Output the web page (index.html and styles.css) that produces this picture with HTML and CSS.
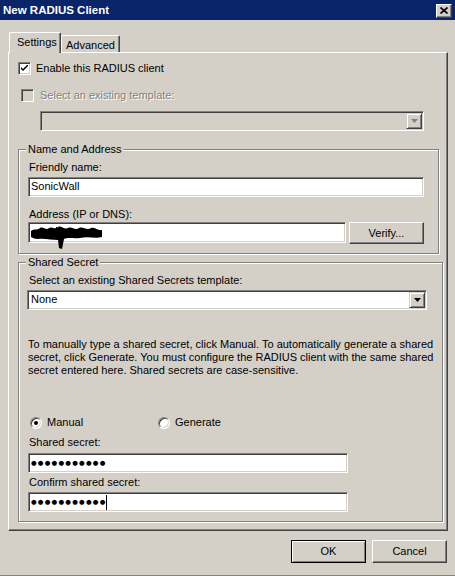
FILE: index.html
```html
<!DOCTYPE html>
<html>
  <head>
    <meta charset="utf-8">
    <title>New RADIUS Client</title>
    <link rel="stylesheet" href="styles.css">
  </head>
  <body>
    <div class="window">
      <div class="titlebar">
        <span class="title">New RADIUS Client</span>
        <button class="close" type="button">
          <svg width="8" height="7" viewBox="0 0 8 7"><path d="M0.5 0.5 L7.5 6.5 M7.5 0.5 L0.5 6.5" stroke="#000" stroke-width="1.6" fill="none"/></svg>
        </button>
      </div>

      <div class="tabs">
        <div class="tab tab-settings active">Settings</div>
        <div class="tab tab-advanced">Advanced</div>
      </div>

      <div class="panel">
        <label class="check-row">
          <span class="check"><svg width="7" height="7" viewBox="0 0 7 7"><path d="M0 2 L2 4 L7 -1 L7 1 L2 6 L0 4 Z" fill="#000"/></svg></span>
          Enable this RADIUS client
        </label>
        <label class="check-row disabled">
          <span class="check"></span>
          Select an existing template:
        </label>
        <div class="combo combo-template disabled">
          <span class="combo-value"></span>
          <span class="combo-btn"><svg width="7" height="4" viewBox="0 0 7 4"><path d="M0 0 H7 L3.5 4 Z" fill="#808080"/></svg></span>
        </div>

        <fieldset class="group group-name">
          <legend>Name and Address</legend>
          <div class="label">Friendly name:</div>
          <div class="field field-name">SonicWall</div>
          <div class="label label-address">Address (IP or DNS):</div>
          <div class="field-row">
            <div class="field field-address">
              <svg class="redact" width="80" height="28" viewBox="0 0 80 28"><path d="M1 6 C4 3 7 6 10 3 C13 1 16 6 19 3 C22 1 25 5 28 2 C31 0 34 5 38 3 C42 1 45 6 49 3 C53 1 57 6 61 3 C65 2 68 6 72 5 L72 12 C66 14 58 11 50 13 C44 14 38 12 34 14 L32 24 L29 23 L28 15 C22 15 14 13 8 14 C5 14 3 13 1 12 Z" fill="#000"/></svg>
            </div>
            <button class="btn btn-verify" type="button">Verify...</button>
          </div>
        </fieldset>

        <fieldset class="group group-secret">
          <legend>Shared Secret</legend>
          <div class="label">Select an existing Shared Secrets template:</div>
          <div class="combo combo-secret">
            <span class="combo-value">None</span>
            <span class="combo-btn"><svg width="7" height="4" viewBox="0 0 7 4"><path d="M0 0 H7 L3.5 4 Z" fill="#000"/></svg></span>
          </div>
          <p class="hint">To manually type a shared secret, click Manual. To automatically generate a shared<br>secret, click Generate. You must configure the RADIUS client with the same shared<br>secret entered here. Shared secrets are case-sensitive.</p>
          <div class="radio-row">
            <label class="radio-item radio-manual"><span class="radio checked"></span>Manual</label>
            <label class="radio-item"><span class="radio"></span>Generate</label>
          </div>
          <div class="label label-secret">Shared secret:</div>
          <div class="field field-secret"><span class="dots">●●●●●●●●●●●</span></div>
          <div class="label label-confirm">Confirm shared secret:</div>
          <div class="field field-secret"><span class="dots">●●●●●●●●●●●</span><span class="caret"></span></div>
        </fieldset>
      </div>

      <div class="footer">
        <button class="btn btn-default" type="button">OK</button>
        <button class="btn" type="button">Cancel</button>
      </div>
    </div>
  </body>
</html>
```

FILE: styles.css
```css
* {
  box-sizing: border-box;
}
body {
  margin: 0;
  background: #d4d0c8;
  font: 11px/13px "Liberation Sans", Arial, sans-serif;
  color: #000;
}
.window {
  width: 455px;
  height: 576px;
  border-bottom: 1px solid #808080;
}

/* caption */
.titlebar {
  display: flex;
  align-items: center;
  justify-content: space-between;
  height: 20px;
  padding: 0 3px 0 3px;
  background: #0a246a;
  color: #fff;
}
.title {
  font-weight: bold;
  font-size: 11.5px;
}
.close {
  display: flex;
  align-items: center;
  justify-content: center;
  width: 16px;
  height: 14px;
  padding: 0;
  margin-top: 1px;
  background: #d4d0c8;
  border: 1px solid;
  border-color: #fff #404040 #404040 #fff;
  box-shadow: inset -1px -1px #808080;
}

/* tab strip */
.tabs {
  display: flex;
  align-items: flex-end;
  height: 20px;
  margin-top: 12px;
  padding-left: 9px;
}
.tab {
  height: 17px;
  padding-top: 3px;
  background: #d4d0c8;
  border-top: 1px solid #fff;
  border-left: 1px solid #fff;
  border-right: 1px solid #404040;
  border-radius: 2px 2px 0 0;
  box-shadow: inset -1px 0 #808080;
}
.tab-settings {
  width: 52px;
  padding-left: 7px;
}
.tab-advanced {
  width: 59px;
  padding-left: 4px;
}
.tab.active {
  position: relative;
  z-index: 1;
  height: 21px;
  margin-bottom: -1px;
  padding-top: 3px;
}

/* page body */
.panel {
  width: 440px;
  height: 479px;
  margin-left: 8px;
  padding: 9px 0 0 9px;
  border: 1px solid;
  border-color: #fff #404040 #404040 #fff;
  box-shadow: inset -1px -1px #808080;
}

.check-row {
  display: flex;
  align-items: center;
  gap: 5px;
  height: 13px;
}
.check {
  display: flex;
  align-items: center;
  justify-content: center;
  width: 13px;
  height: 13px;
  background: #fff;
  border: 1px solid;
  border-color: #808080 #fff #fff #808080;
  box-shadow: inset 1px 1px #404040, inset -1px -1px #d4d0c8;
}
.check-row.disabled {
  margin-top: 14px;
  padding-left: 3px;
  gap: 6px;
  color: #808080;
  text-shadow: 1px 1px #fff;
}
.check-row.disabled .check {
  background: #d4d0c8;
}

/* drop-down lists */
.combo {
  display: flex;
  justify-content: space-between;
  height: 20px;
  padding: 1px;
  background: #fff;
  border: 1px solid;
  border-color: #808080 #fff #fff #808080;
  box-shadow: inset 1px 1px #404040, inset -1px -1px #d4d0c8;
}
.combo.disabled {
  background: #d4d0c8;
}
.combo-value {
  padding: 1px 0 0 2px;
}
.combo-btn {
  display: flex;
  align-items: center;
  justify-content: center;
  width: 16px;
  height: 16px;
  background: #d4d0c8;
  border: 1px solid;
  border-color: #d4d0c8 #404040 #404040 #d4d0c8;
  box-shadow: inset 1px 1px #fff, inset -1px -1px #808080;
}
.combo-template {
  width: 384px;
  margin: 9px 0 0 22px;
}
.combo-secret {
  width: 400px;
  margin: 3px 0 0 -1px;
}

/* group boxes */
.group {
  width: 421px;
  margin: 0;
  padding: 5px 9px 9px 9px;
  border: 1px solid #808080;
  box-shadow: inset 1px 1px #fff, 1px 1px #fff;
}
.group legend {
  margin-left: -2px;
  padding: 0 2px;
  background: #d4d0c8;
}
.group-name {
  margin-top: 12px;
}
.group-secret {
  margin-top: 2px;
}

.label {
  padding-left: 1px;
}
.label-address {
  margin-top: 11px;
}
.label-secret {
  margin-top: 7px;
}
.label-confirm {
  margin-top: 3px;
}

/* edit boxes */
.field {
  position: relative;
  height: 20px;
  margin-top: 3px;
  padding: 2px 0 0 2px;
  background: #fff;
  border: 1px solid;
  border-color: #808080 #fff #fff #808080;
  box-shadow: inset 1px 1px #404040, inset -1px -1px #d4d0c8;
}
.field-name {
  width: 396px;
}
.field-row {
  display: flex;
  gap: 3px;
  margin-top: 1px;
}
.field-address {
  width: 318px;
  height: 21px;
  margin-top: 0;
}
.redact {
  position: absolute;
  left: 1px;
  top: 2px;
}
.field-secret {
  width: 320px;
  display: flex;
  align-items: center;
  padding: 0 0 0 2px;
}
.label-secret + .field-secret {
  margin-top: 4px;
}
.dots {
  font-family: "DejaVu Sans", sans-serif;
  font-size: 6.5px;
  letter-spacing: 1.2px;
}
.caret {
  width: 1px;
  height: 15px;
  margin-left: -1px;
  background: #000;
}

.hint {
  margin: 28px 0 0 0;
  white-space: nowrap;
}

/* option buttons */
.radio-row {
  display: flex;
  align-items: center;
  height: 13px;
  margin-top: 39px;
  padding-left: 2px;
}
.radio-item {
  display: flex;
  align-items: center;
  gap: 5px;
}
.radio-manual {
  width: 128px;
}
.radio {
  position: relative;
  width: 12px;
  height: 12px;
  border-radius: 50%;
  background: #fff;
  border: 1px solid;
  border-color: #808080 #fff #fff #808080;
  box-shadow: inset 1px 1px #404040, inset -1px -1px #d4d0c8;
}
.radio.checked::after {
  content: "";
  position: absolute;
  left: 3px;
  top: 3px;
  width: 4px;
  height: 4px;
  border-radius: 50%;
  background: #000;
}

/* push buttons */
.btn {
  height: 23px;
  padding: 0;
  font: inherit;
  color: #000;
  background: #d4d0c8;
  border: 1px solid;
  border-color: #fff #404040 #404040 #fff;
  box-shadow: inset -1px -1px #808080;
}
.btn-verify {
  width: 75px;
  height: 22px;
}
.btn-default {
  border-color: #000;
  box-shadow: inset 1px 1px #fff, inset -1px -1px #808080;
}
.footer {
  display: flex;
  justify-content: flex-end;
  gap: 6px;
  margin-top: 9px;
  padding-right: 8px;
}
.footer .btn {
  width: 75px;
}
```
